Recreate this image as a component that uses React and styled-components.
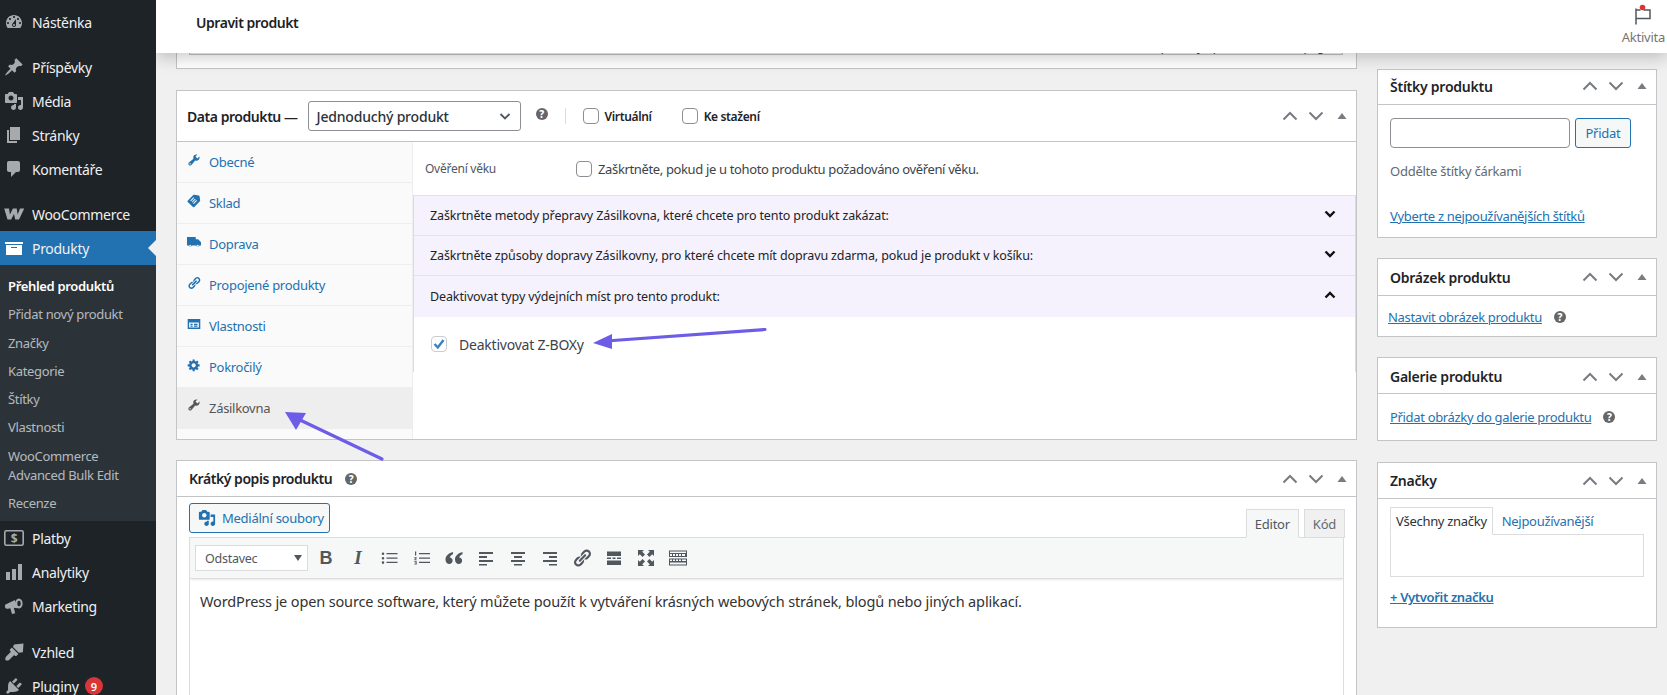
import React from 'react';
import styled, { createGlobalStyle } from 'styled-components';

const Global = createGlobalStyle`
  html, body { margin: 0; padding: 0; height: 695px; overflow: hidden; background: #f0f0f1; }
  body { font-family: "Noto Sans", "Open Sans", sans-serif; font-size: 13px; color: #3c434a; letter-spacing: -0.25px; }
  * { box-sizing: border-box; }
`;

const Shell = styled.div`position: relative; display: flex; width: 1667px; height: 695px; overflow: hidden;`;
const Sidebar = styled.nav`position: relative; z-index: 3; width: 156px; flex: none; background: #1d2327; padding-top: 5px; height: 740px;`;
const MenuItem = styled.div`
  position: relative; display: flex; align-items: center; height: 34px; font-size: 14px; letter-spacing: -0.3px; color: #f0f0f1; padding-left: 32px;
  background: ${p => (p.$active ? '#2271b1' : 'transparent')};
  margin-top: ${p => p.$gap || 0}px;
  ${p => p.$active && `&::after { content: ""; position: absolute; right: 0; top: 9px; border: 8px solid transparent; border-right-color: #f0f0f1; border-left-width: 0; }`}
`;
const MenuIcon = styled.svg`position: absolute; left: ${p => p.$left ?? 4}px; top: 7px; width: 20px; height: 20px; fill: ${p => (p.$active ? '#fff' : '#a7aaad')};`;
const Badge = styled.span`display: inline-flex; align-items: center; justify-content: center; width: 18px; height: 18px; border-radius: 50%; background: #d63638; color: #fff; font-size: 11px; font-weight: 600; margin-left: 6px;`;
const SubMenu = styled.div`background: #2c3338; height: 256px; padding-top: 7px;`;
const SubItem = styled.div`padding: 5px 8px 4.3px; font-size: 13px; line-height: 19px; letter-spacing: -0.33px; color: ${p => (p.$current ? '#fff' : 'rgba(240,246,252,.7)')}; font-weight: ${p => (p.$current ? 600 : 400)};`;

const Content = styled.div`position: relative; flex: 1; min-width: 0; display: flex; gap: 20px; padding: 0 10px 0 20px;`;
const Header = styled.header`
  position: absolute; z-index: 2; left: 0; right: 0; top: 0; height: 53px; background: #fff; display: flex; align-items: center; justify-content: space-between; padding: 0 2px 9px 40px;
  box-shadow: 0 4px 16px rgba(0,0,0,.22);
`;
const PageTitle = styled.h1`margin: 0; font-size: 14px; font-weight: 600; color: #1e1e1e; letter-spacing: -0.45px;`;
const Activity = styled.div`display: flex; flex-direction: column; align-items: center; font-size: 13px; color: #757575; padding-top: 9px; gap: 4px; line-height: 16px;`;
const FlagIcon = styled.svg`width: 20px; height: 20px; margin-top: -3px; overflow: visible;`;

const MainCol = styled.main`width: 1181px; flex: none; display: flex; flex-direction: column;`;
const SideCol = styled.aside`width: 280px; flex: none; padding-top: 69px; display: flex; flex-direction: column; gap: 20px;`;

const TopBox = styled.section`height: 69px; flex: none; background: #fff; border: 1px solid #c3c4c7; border-top: 0; padding: 0 13px 13px 12px; margin-bottom: 21px;`;
const TopInner = styled.div`height: 55px; border: 1px solid #c3c4c7; border-top: 0; background: #f6f7f7; display: flex; align-items: flex-end; justify-content: flex-end; padding: 0 8px 0 0; font-size: 12px; line-height: 15px;`;

const Box = styled.section`background: #fff; border: 1px solid #c3c4c7; flex: none;`;
const DataBox = styled(Box)`height: 350px; margin-bottom: 20px; display: flex; flex-direction: column;`;
const ShortBox = styled(Box)`height: 300px;`;
const BrandBox = styled(Box)`margin-top: 1px;`;
const BoxHead = styled.div`
  display: flex; align-items: center; height: ${p => p.$h || 36}px; border-bottom: 1px solid #c3c4c7; padding: ${p => p.$pt || 0}px 0 ${p => p.$pb || 0}px ${p => p.$pad || 12}px; flex: none;
`;
const BoxTitle = styled.h2`margin: 0; font-size: 14px; font-weight: 600; color: #1d2327; white-space: nowrap; letter-spacing: ${p => (p.$tight ? '-0.45px' : '-0.25px')};`;
const Controls = styled.div`margin-left: auto; display: flex; align-items: center; gap: 6px; width: 76px; color: #787c82;`;
const Ctl = styled.svg`width: 20px; height: 20px; flex: none; fill: none; stroke: #787c82; stroke-width: 2;`;
const Tri = styled.svg`width: 20px; height: 20px; flex: none; fill: #787c82;`;

const Help = styled.span`display: inline-flex; align-items: center; justify-content: center; width: 12px; height: 12px; border-radius: 50%; background: #666; color: #fff; font-size: 10px; font-weight: 800; line-height: 1; letter-spacing: 0;`;
const TypeSelect = styled.div`display: flex; align-items: center; justify-content: space-between; width: 213px; height: 30px; border: 1px solid #8c8f94; border-radius: 3px; padding: 0 8px; margin-left: 10px; font-size: 14px; letter-spacing: -0.2px; color: #2c3338; font-weight: 500;`;
const HelpSlot = styled.span`margin-left: ${p => p.$ml ?? 15}px; display: inline-flex; margin-top: ${p => p.$mt ?? -5}px;`;
const VBar = styled.span`width: 1px; height: 16px; background: #dcdcde; margin: 0 17px 0 17px;`;
const Check = styled.span`display: inline-flex; align-items: center; justify-content: center; width: 16px; height: 16px; border: 1px solid #8c8f94; border-radius: 4px; background: #fff; flex: none;`;
const HeadLabel = styled.label`display: inline-flex; align-items: center; gap: 6px; font-size: 12px; font-weight: 600; letter-spacing: -0.35px; color: #1d2327; margin-right: 30px;`;

const Panel = styled.div`flex: 1; display: flex; min-height: 0;`;
const TabList = styled.ul`margin: 0; padding: 0; list-style: none; width: 236px; flex: none; background: #fafafa; border-right: 1px solid #eee;`;
const TabItem = styled.li`
  position: relative; display: flex; align-items: center; height: ${p => p.$h}px; padding-left: 32px; font-size: 13px; letter-spacing: -0.3px; border-bottom: 1px solid ${p => (p.$active || p.$h === 40 ? 'transparent' : '#eee')};
  background: ${p => (p.$active ? '#eee' : 'transparent')}; color: ${p => (p.$active ? '#555' : '#2271b1')};
`;
const TabIcon = styled.svg`position: absolute; left: 10px; top: 11px; width: 14px; height: 14px; fill: ${p => (p.$active ? '#555' : '#2271b1')};`;
const PanelBody = styled.div`flex: 1; min-width: 0; display: flex; flex-direction: column;`;
const AgeRow = styled.div`display: flex; align-items: center; height: 53px; padding: 0 0 0 12px; color: #3c434a;`;
const AgeLabel = styled.span`width: 151px; font-size: 12px; color: #50575e;`;
const AgeText = styled.span`margin-left: 6px; font-size: 13px; letter-spacing: -0.36px;`;
const Accordion = styled.div`border-left: 1px solid #dcd8f0; border-right: 1px solid #dcd8f0; height: 177px;`;
const AccRow = styled.div`
  display: flex; align-items: center; justify-content: space-between; height: ${p => p.$h || 40}px; padding: 0 18px 0 16px; background: #f5f2fd; border-top: 1px solid #e4dff6; color: #1d2327; font-size: 12.5px; letter-spacing: -0.12px;
  &:last-of-type { border-bottom: 1px solid #e4dff6; }
`;
const AccChevron = styled.svg`width: 14px; height: 14px; margin-top: -4px; fill: none; stroke: #111; stroke-width: 2.4;`;
const AccBody = styled.div`display: flex; align-items: center; gap: 12px; height: 55px; padding: 0 0 1px 17px; font-size: 14px; letter-spacing: -0.22px; color: #3c434a;`;
const CheckedBox = styled(Check)`border-color: #c9ccd1;`;

const EditorWrap = styled.div`padding: 6px 12px 0 12px;`;
const EditorTop = styled.div`display: flex; align-items: flex-end; height: 34px;`;
const MediaBtn = styled.button`display: inline-flex; align-items: center; gap: 6px; height: 30px; width: 141px; margin-bottom: 4px; padding: 0 0 0 8px; border: 1px solid #2271b1; border-radius: 3px; background: #f6f7f7; color: #2271b1; font: inherit; font-size: 13px; letter-spacing: inherit;`;
const EdTabs = styled.div`margin-left: auto; display: flex; gap: 5px; align-self: flex-end; margin-right: -1px; margin-bottom: -1px; position: relative; z-index: 1;`;
const EdTab = styled.div`height: 29px; padding: 0 8px; display: flex; align-items: center; font-size: 13px; color: ${p => (p.$on ? '#50575e' : '#646970')}; background: ${p => (p.$on ? '#f6f7f7' : '#f0f0f1')}; border: 1px solid #dcdcde; border-bottom-color: ${p => (p.$on ? '#f6f7f7' : '#dcdcde')};`;
const EdFrame = styled.div`border: 1px solid #dcdcde; border-bottom: 0; height: 200px;`;
const Toolbar = styled.div`display: flex; align-items: center; height: 41px; background: #f6f7f7; padding-left: 5px; border-bottom: 1px solid #dcdcde; box-shadow: 0 2px 2px -1px rgba(0,0,0,.1);`;
const FormatSelect = styled.div`display: flex; align-items: center; justify-content: space-between; width: 113px; height: 26px; background: #fff; border: 1px solid #dcdcde; padding: 0 5px 0 9px; font-size: 12.5px; color: #50575e; margin-right: 2px;`;
const Caret = styled.span`width: 0; height: 0; border: 4px solid transparent; border-top: 6px solid #50575e; border-bottom: 0;`;
const ToolBtn = styled.span`width: 32px; height: 26px; flex: none; display: flex; align-items: center; justify-content: center; color: #50575e;`;
const BoldMark = styled.span`font-family: "Liberation Sans", sans-serif; font-size: 18px; font-weight: 700; color: #50575e; letter-spacing: 0;`;
const ItalicMark = styled(BoldMark)`font-family: "Liberation Serif", serif; font-style: italic; font-size: 19px;`;
const ToolSvg = styled.svg`width: 20px; height: 20px; fill: #50575e;`;
const EdText = styled.p`margin: 0; padding: 12px 10px; font-size: 14.5px; line-height: 20px; letter-spacing: -0.14px; color: #333;`;

const SideBody = styled.div`padding: ${p => p.$pad || '12px 12px'};`;
const AddRow = styled.div`display: flex; gap: 5px;`;
const TagInput = styled.div`width: 180px; height: 30px; border: 1px solid #8c8f94; border-radius: 4px; background: #fff;`;
const AddBtn = styled.div`display: flex; align-items: center; justify-content: center; width: 56px; height: 30px; border: 1px solid #2271b1; border-radius: 3px; background: #f6f7f7; color: #2271b1; font-size: 13px;`;
const Hint = styled.p`margin: 14px 0 0; line-height: 18px; font-size: 13px; color: #646970;`;
const SideLink = styled.a`color: #2271b1; text-decoration: underline; font-size: 13px; line-height: 18px; letter-spacing: -0.33px; font-weight: ${p => (p.$b ? 600 : 400)};`;
const LinkRow = styled.div`display: flex; align-items: center; gap: 12px; margin-left: ${p => p.$ml || 0}px; height: 18px;`;
const BlockRow = styled.div`margin-top: ${p => p.$mt || 0}px; height: 18px; line-height: 18px;`;
const BrandTabs = styled.div`display: flex; align-items: stretch; height: 28px; margin-bottom: -1px; position: relative;`;
const BrandTab = styled.div`display: flex; align-items: center; padding: 0 5px; font-size: 13px; letter-spacing: -0.3px; color: ${p => (p.$on ? '#2c3338' : '#2271b1')}; ${p => p.$on && 'border: 1px solid #dcdcde; border-bottom-color: #fff;'} ${p => !p.$on && 'padding-left: 9px;'}`;
const BrandPanel = styled.div`height: 43px; width: 254px; border: 1px solid #dcdcde;`;

const Overlay = styled.svg`position: absolute; left: 0; top: 0; z-index: 4; width: 1667px; height: 695px; pointer-events: none;`;

const P = {
  dash: 'M3.76 16h12.48c1.1-1.37 1.76-3.11 1.76-5 0-4.42-3.58-8-8-8s-8 3.58-8 8c0 1.89.66 3.63 1.76 5zM10 4c.55 0 1 .45 1 1s-.45 1-1 1-1-.45-1-1 .45-1 1-1zM6 6c.55 0 1 .45 1 1s-.45 1-1 1-1-.45-1-1 .45-1 1-1zm8 0c.55 0 1 .45 1 1s-.45 1-1 1-1-.45-1-1 .45-1 1-1zm-5.37 5.55L12 7v6c0 1.1-.9 2-2 2s-2-.9-2-2c0-.57.24-1.08.63-1.45zM4 10c.55 0 1 .45 1 1s-.45 1-1 1-1-.45-1-1 .45-1 1-1zm12 0c.55 0 1 .45 1 1s-.45 1-1 1-1-.45-1-1 .45-1 1-1zm-5 3c0-.55-.45-1-1-1s-1 .45-1 1 .45 1 1 1 1-.45 1-1z',
  pin: 'M10.44 3.02l1.82-1.82 6.36 6.35-1.83 1.82c-1.05-.68-2.48-.57-3.41.36l-.75.75c-.92.93-1.04 2.35-.35 3.41l-1.83 1.82-2.41-2.41-2.8 2.79c-.42.42-3.38 2.71-3.8 2.29s1.86-3.39 2.28-3.81l2.79-2.79L4.1 9.36l1.83-1.82c1.05.69 2.48.57 3.41-.36l.75-.75c.93-.92 1.04-2.35.35-3.41z',
  media: 'M13 11V4c0-.55-.45-1-1-1h-1.67L9 1H5L3.67 3H2c-.55 0-1 .45-1 1v7c0 .55.45 1 1 1h10c.55 0 1-.45 1-1zM7 4.5c1.38 0 2.5 1.12 2.5 2.5S8.38 9.5 7 9.5 4.5 8.38 4.5 7 5.62 4.5 7 4.5zM14 6h5v10.5c0 1.38-1.12 2.5-2.5 2.5S14 17.88 14 16.5s1.12-2.5 2.5-2.5c.17 0 .34.02.5.05V9h-3V6zm-4 8.05V13h2v3.5c0 1.38-1.12 2.5-2.5 2.5S7 17.88 7 16.5 8.12 14 9.5 14c.17 0 .34.02.5.05z',
  page: 'M6 15V2h10v13H6zm-1 1h8v2H3V5h2v11z',
  comment: 'M5 2h9c1.1 0 2 .9 2 2v7c0 1.1-.9 2-2 2h-2l-5 5v-5H5c-1.1 0-2-.9-2-2V4c0-1.1.9-2 2-2z',
  woo: 'M.2 4.500H5l.9 6 3-6h3.800l1 6 2.300-6h4.300L15 15.500h-3.800l-1.200-5.500-2.800 5.500H3.500z',
  archive: 'M19 4v2H1V4h18zM2 7h16v10H2V7zm11 3V9H7v1h6z',
  chart: 'M18 18V2h-4v16h4zm-6 0V7H8v11h4zm-6 0v-8H2v8h4z',
  mega: 'M1.500 8.500 11 4c.5 2.800 1.200 5.600 2.200 8.200L9.800 11.800l1.400 5.400-3.200.8-1.700-5.700-2.300.4C2.500 13 1.200 12.300 1 11c-.2-1 0-2 .5-2.500zM14.800 2.500c2.300 0 3.800 2.300 3.800 5s-1.500 5-3.800 5-3.300-2.300-3.300-5 1-5 3.300-5zm.2 2.200c-1.200 0-1.700 1.300-1.700 2.800s.5 2.800 1.700 2.800 1.700-1.300 1.700-2.800-.5-2.800-1.700-2.800z',
  brush: 'M10 2.500l9.500-1-.6 8.700-4.100.6-5.800-5.800zM7.900 5.600l6.500 6.500-1.800 1.600c-.5.500-1.300.5-1.800 0l-.7-.7-4.700 4.700c-.8.800-2.900 1.300-3.700.5s-.3-2.900.5-3.700l4.700-4.700-.7-.7c-.5-.5-.5-1.300 0-1.800z',
  plug: 'M13.11 4.36L9.87 7.6 8 5.73l3.24-3.24c.35-.34 1.05-.2 1.56.32.52.51.66 1.21.31 1.55zm-8 1.77l.91-1.12 9.01 9.01-1.19.84c-.71.71-2.63 1.16-3.82 1.16H6.14L4.9 17.26c-.59.59-1.54.59-2.12 0-.59-.58-.59-1.53 0-2.12l1.24-1.24v-3.88c0-1.13.4-3.19 1.09-3.89zm7.26 3.97l3.24-3.24c.34-.35 1.04-.21 1.55.31.52.51.66 1.21.31 1.55l-3.24 3.25z',
  tools: 'M16.68 9.77c-1.34 1.34-3.3 1.67-4.95.99l-5.41 6.52c-.99.99-2.59.99-3.58 0s-.99-2.59 0-3.57l6.52-5.42c-.68-1.65-.35-3.61.99-4.95 1.28-1.28 3.12-1.62 4.72-1.06l-2.89 2.89 2.82 2.82 2.86-2.87c.53 1.58.18 3.39-1.08 4.67zM3.81 16.21c.4.39 1.04.39 1.43 0 .4-.4.4-1.04 0-1.43-.39-.4-1.03-.4-1.43 0-.39.39-.39 1.03 0 1.43z',
  tag: 'M1 9.500L9 1.500c.4-.4 1-.5 1.500-.5L17 2.200c.8.2 1 .8 1 1.300l.800 5.500c.1.500 0 1-.4 1.400l-8 8c-.5.500-1.300.5-1.800 0L1 11.300c-.5-.5-.5-1.300 0-1.800zm8.300-4.800L4.700 9.300l1 1 4.600-4.600zm2 2l-4.600 4.600 1 1 4.600-4.600zm2 2l-4.600 4.600 1 1 4.600-4.600z',
  truck: 'M0 3h12.500v3H16l4 4.500V15h-2.200a2.200 2.200 0 0 1-4.300 0H6.700a2.200 2.200 0 0 1-4.300 0H0zM4.500 14a1.200 1.200 0 1 0 0 2.400 1.200 1.200 0 0 0 0-2.400zm11 0a1.200 1.200 0 1 0 0 2.400 1.200 1.200 0 0 0 0-2.400z',
  link: 'M17.74 2.76c1.68 1.69 1.68 4.41 0 6.1l-1.53 1.52c-1.12 1.12-2.7 1.47-4.14 1.09l2.62-2.61.76-.77.76-.76c.84-.84.84-2.2 0-3.04-.84-.85-2.2-.85-3.04 0l-.77.76-3.38 3.38c-.37-1.44-.02-3.02 1.1-4.14l1.52-1.53c1.69-1.68 4.42-1.68 6.1 0zM8.59 13.43l5.34-5.34c.42-.42.42-1.1 0-1.52-.44-.43-1.13-.39-1.53 0l-5.33 5.34c-.42.42-.42 1.1 0 1.52.44.43 1.13.39 1.52 0zm-.76 2.29l4.14-4.15c.38 1.44.03 3.02-1.09 4.14l-1.52 1.53c-1.69 1.68-4.41 1.68-6.1 0-1.68-1.68-1.68-4.42 0-6.1l1.53-1.52c1.12-1.12 2.7-1.47 4.14-1.1l-4.14 4.15c-.85.84-.85 2.2 0 3.05.84.84 2.2.84 3.04 0z',
  attrs: 'M1 3h18v14H1zM3 8v7h14V8zm2 1.500h3v2H5zm0 2.800h3v1.500H5zm5-2.800h5v2h-5zm0 2.800h5v1.500h-5z',
  gear: 'M18 12h-2.18c-.17.7-.44 1.35-.81 1.93l1.54 1.54-2.1 2.1-1.54-1.54c-.58.36-1.23.63-1.91.79V19H8v-2.18c-.68-.16-1.33-.43-1.91-.79l-1.54 1.54-2.12-2.12 1.54-1.54c-.36-.58-.63-1.23-.79-1.91H1V9.03h2.17c.16-.7.44-1.35.8-1.94L2.43 5.55l2.1-2.1 1.54 1.54c.58-.37 1.24-.64 1.93-.81V2h3v2.18c.68.16 1.33.43 1.91.79l1.54-1.54 2.12 2.12-1.54 1.54c.36.59.64 1.24.8 1.94H18V12zm-8.500 1.500c1.660 0 3-1.340 3-3s-1.340-3-3-3-3 1.340-3 3 1.340 3 3 3z',
  ul: 'M3 4.500a1.300 1.300 0 1 1 0 2.600 1.300 1.300 0 0 1 0-2.600zm0 4.400a1.300 1.300 0 1 1 0 2.600 1.300 1.300 0 0 1 0-2.600zm0 4.400a1.300 1.300 0 1 1 0 2.600 1.300 1.300 0 0 1 0-2.600zM6.500 5h11v1.300h-11zm0 4.400h11v1.300h-11zm0 4.400h11v1.300h-11z',
  ol: 'M7 5h11v1.300H7zm0 4.400h11v1.300H7zm0 4.400h11v1.300H7zM3 3.500h1.200v4H3zM2.300 9.300h2.400v.9l-1.400 1.300h1.400v.8H2.300v-.9l1.400-1.200H2.300zm0 4h2.400v3.200H2.300v-.8h1.500v-.4H2.800v-.7h1v-.5H2.300z',
  quote: 'M9 4C5 5 1.500 7.500 1.500 11.500 1.500 14.300 3.200 16 5.200 16s3.400-1.500 3.400-3.300S7.300 9.600 5.700 9.600C6 8.200 7.300 7 9 6.300zm9.500 0c-4 1-7.500 3.500-7.500 7.500 0 2.800 1.700 4.500 3.700 4.500s3.400-1.500 3.400-3.300-1.300-3.100-2.900-3.100c.3-1.400 1.600-2.600 3.300-3.300z',
  left: 'M3 4h14v2H3zm0 4h8v2H3zm0 4h14v2H3zm0 4h8v1.500H3z',
  center: 'M3 4h14v2H3zm3 4h8v2H6zm-3 4h14v2H3zm3 4h8v1.500H6z',
  right: 'M3 4h14v2H3zm6 4h8v2H9zm-6 4h14v2H3zm6 4h8v1.500H9z',
  more: 'M3 3.500h14V8H3zm0 6h4v1.500H3zm5.500 0h3v1.500h-3zm4.500 0h4v1.500h-4zM3 12.500h14V17H3z',
  full: 'M2 2h6L6.200 3.800 9 6.600 6.600 9 3.800 6.200 2 8zm16 0v6l-1.800-1.800L13.400 9 11 6.600l2.800-2.800L12 2zM2 18v-6l1.800 1.800L6.600 11 9 13.400l-2.800 2.800L8 18zm16 0h-6l1.800-1.800L11 13.400 13.400 11l2.800 2.800L18 12z',
  kitchen: 'M1 2.500h18v6.500H1zm1 1v1.500h16V3.500zm0 2.500v2h2V6zm3 0v2h2V6zm3 0v2h2V6zm3 0v2h2V6zm3 0v2h3V6zM1 10.500h18v7H1zm1 1v1.500h2v-1.500zm3 0v1.500h2v-1.500zm3 0v1.500h2v-1.500zm3 0v1.500h2v-1.500zm3 0v1.500h4v-1.500zM2 14.500v2h16v-2z',
};

const Ico = ({ d, active, left }) => <MenuIcon viewBox="0 0 20 20" $active={active} $left={left}><path d={d} /></MenuIcon>;

const Pay = () => (
  <MenuIcon viewBox="0 0 20 20">
    <rect x="0.8" y="2.800" width="18.400" height="14.400" rx="1.500" fill="none" stroke="#a7aaad" strokeWidth="1.600" />
    <text x="10" y="14.500" textAnchor="middle" fontSize="12" fontWeight="700" fill="#a7aaad" fontFamily="Noto Sans">$</text>
  </MenuIcon>
);

const Up = () => <Ctl viewBox="0 0 20 20"><path d="M3.500 13.500 10 7l6.500 6.500" /></Ctl>;
const Down = () => <Ctl viewBox="0 0 20 20"><path d="M3.500 6.500 10 13l6.500-6.500" /></Ctl>;
const Toggle = () => <Tri viewBox="0 0 20 20"><path d="M5.500 13 10 7l4.500 6z" /></Tri>;
const BoxControls = () => <Controls><Up /><Down /><Toggle /></Controls>;

const topMenu = [
  { t: 'Příspěvky', d: P.pin, gap: 11 },
  { t: 'Média', d: P.media },
  { t: 'Stránky', d: P.page },
  { t: 'Komentáře', d: P.comment },
];
const subs = ['Přidat nový produkt', 'Značky', 'Kategorie', 'Štítky', 'Vlastnosti', 'WooCommerce Advanced Bulk Edit', 'Recenze'];
const tabs = [
  ['Obecné', P.tools, false, 41], ['Sklad', P.tag, false, 41], ['Doprava', P.truck, false, 41], ['Propojené produkty', P.link, false, 41],
  ['Vlastnosti', P.attrs, false, 41], ['Pokročilý', P.gear, false, 40], ['Zásilkovna', P.tools, true, 42],
];
const tools = [P.ul, P.ol, P.quote, P.left, P.center, P.right, P.link, P.more, P.full, P.kitchen];

export default function App() {
  return (
    <Shell>
      <Global />
      <Sidebar>
        <MenuItem><Ico d={P.dash} />Nástěnka</MenuItem>
        {topMenu.map(m => <MenuItem key={m.t} $gap={m.gap}><Ico d={m.d} />{m.t}</MenuItem>)}
        <MenuItem $gap={11}><Ico d={P.woo} />WooCommerce</MenuItem>
        <MenuItem $active><Ico d={P.archive} active />Produkty</MenuItem>
        <SubMenu>
          <SubItem $current>Přehled produktů</SubItem>
          {subs.map(s => <SubItem key={s}>{s}</SubItem>)}
        </SubMenu>
        <MenuItem><Pay />Platby</MenuItem>
        <MenuItem><Ico d={P.chart} />Analytiky</MenuItem>
        <MenuItem><Ico d={P.mega} />Marketing</MenuItem>
        <MenuItem $gap={12}><Ico d={P.brush} />Vzhled</MenuItem>
        <MenuItem><Ico d={P.plug} />Pluginy<Badge>9</Badge></MenuItem>
      </Sidebar>

      <Content>
        <Header>
          <PageTitle>Upravit produkt</PageTitle>
          <Activity>
            <FlagIcon viewBox="0 0 20 20">
              <path d="M3 3.500v16M3 5h4.500M10.500 5H17v8.500H3" fill="none" stroke="#50575e" strokeWidth="1.500" />
              <circle cx="9.500" cy="2.500" r="2.800" fill="#d63638" />
            </FlagIcon>
            Aktivita
          </Activity>
        </Header>

        <MainCol>
          <TopBox><TopInner>Naposledy upraveno (admin_page)</TopInner></TopBox>

          <DataBox>
            <BoxHead $h={51} $pad={10}>
              <BoxTitle $tight>Data produktu —</BoxTitle>
              <TypeSelect>Jednoduchý produkt
                <svg width="14" height="14" viewBox="0 0 14 14" fill="none" stroke="#50575e" strokeWidth="1.800"><path d="M2.500 5 7 9.500 11.500 5" /></svg>
              </TypeSelect>
              <HelpSlot><Help>?</Help></HelpSlot>
              <VBar />
              <HeadLabel><Check />Virtuální</HeadLabel>
              <HeadLabel><Check />Ke stažení</HeadLabel>
              <BoxControls />
            </BoxHead>
            <Panel>
              <TabList>
                {tabs.map(([t, d, on, h]) => (
                  <TabItem key={t} $active={on} $h={h}><TabIcon viewBox="0 0 20 20" $active={on}><path d={d} /></TabIcon>{t}</TabItem>
                ))}
              </TabList>
              <PanelBody>
                <AgeRow>
                  <AgeLabel>Ověření věku</AgeLabel>
                  <Check />
                  <AgeText>Zaškrtněte, pokud je u tohoto produktu požadováno ověření věku.</AgeText>
                </AgeRow>
                <Accordion>
                  <AccRow>Zaškrtněte metody přepravy Zásilkovna, které chcete pro tento produkt zakázat:
                    <AccChevron viewBox="0 0 14 14"><path d="M2.500 4.500 7 9l4.500-4.500" /></AccChevron>
                  </AccRow>
                  <AccRow>Zaškrtněte způsoby dopravy Zásilkovny, pro které chcete mít dopravu zdarma, pokud je produkt v košíku:
                    <AccChevron viewBox="0 0 14 14"><path d="M2.500 4.500 7 9l4.500-4.500" /></AccChevron>
                  </AccRow>
                  <AccRow $h={42}>Deaktivovat typy výdejních míst pro tento produkt:
                    <AccChevron viewBox="0 0 14 14"><path d="M2.500 9.500 7 5l4.500 4.500" /></AccChevron>
                  </AccRow>
                  <AccBody>
                    <CheckedBox>
                      <svg width="14" height="14" viewBox="0 0 14 14" fill="none" stroke="#3582c4" strokeWidth="2.400"><path d="M2.500 7 5.800 10.500 11.500 3" /></svg>
                    </CheckedBox>
                    Deaktivovat Z-BOXy
                  </AccBody>
                </Accordion>
              </PanelBody>
            </Panel>
          </DataBox>

          <ShortBox>
            <BoxHead $h={36}>
              <BoxTitle $tight>Krátký popis produktu</BoxTitle>
              <HelpSlot $ml={13} $mt={0}><Help>?</Help></HelpSlot>
              <BoxControls />
            </BoxHead>
            <EditorWrap>
              <EditorTop>
                <MediaBtn>
                  <svg width="18" height="18" viewBox="0 0 20 20" fill="#2271b1"><path d={P.media} /></svg>
                  Mediální soubory
                </MediaBtn>
                <EdTabs><EdTab $on>Editor</EdTab><EdTab>Kód</EdTab></EdTabs>
              </EditorTop>
              <EdFrame>
                <Toolbar>
                  <FormatSelect>Odstavec<Caret /></FormatSelect>
                  <ToolBtn><BoldMark>B</BoldMark></ToolBtn>
                  <ToolBtn><ItalicMark>I</ItalicMark></ToolBtn>
                  {tools.map((d, i) => <ToolBtn key={i}><ToolSvg viewBox="0 0 20 20"><path d={d} fillRule="evenodd" /></ToolSvg></ToolBtn>)}
                </Toolbar>
                <EdText>WordPress je open source software, který můžete použít k vytváření krásných webových stránek, blogů nebo jiných aplikací.</EdText>
              </EdFrame>
            </EditorWrap>
          </ShortBox>
        </MainCol>

        <SideCol>
          <Box>
            <BoxHead $h={35} $pb={2}><BoxTitle>Štítky produktu</BoxTitle><BoxControls /></BoxHead>
            <SideBody $pad="13px 12px 12px">
              <AddRow><TagInput /><AddBtn>Přidat</AddBtn></AddRow>
              <Hint>Oddělte štítky čárkami</Hint>
              <BlockRow $mt={27}><SideLink>Vyberte z nejpoužívanějších štítků</SideLink></BlockRow>
            </SideBody>
          </Box>
          <Box>
            <BoxHead $h={37}><BoxTitle>Obrázek produktu</BoxTitle><BoxControls /></BoxHead>
            <SideBody $pad="12px 12px 10px">
              <LinkRow $ml={-2}><SideLink>Nastavit obrázek produktu</SideLink><Help>?</Help></LinkRow>
            </SideBody>
          </Box>
          <Box>
            <BoxHead $pt={2}><BoxTitle>Galerie produktu</BoxTitle><BoxControls /></BoxHead>
            <SideBody $pad="14px 12px 14px">
              <LinkRow><SideLink>Přidat obrázky do galerie produktu</SideLink><Help>?</Help></LinkRow>
            </SideBody>
          </Box>
          <BrandBox>
            <BoxHead><BoxTitle>Značky</BoxTitle><BoxControls /></BoxHead>
            <SideBody $pad="8px 12px 21px">
              <BrandTabs><BrandTab $on>Všechny značky</BrandTab><BrandTab>Nejpoužívanější</BrandTab></BrandTabs>
              <BrandPanel />
              <BlockRow $mt={11}><SideLink $b>+ Vytvořit značku</SideLink></BlockRow>
            </SideBody>
          </BrandBox>
        </SideCol>
      </Content>

      <Overlay viewBox="0 0 1667 695">
        <path d="M765 329.500 606 341" fill="none" stroke="#6c5ce7" strokeWidth="3.200" strokeLinecap="round" />
        <path d="M593 343 612 334 612 349z" fill="#6c5ce7" />
        <path d="M382 459 298 419" fill="none" stroke="#6c5ce7" strokeWidth="3.200" strokeLinecap="round" />
        <path d="M285 412 306 413 296 430z" fill="#6c5ce7" />
      </Overlay>
    </Shell>
  );
}
